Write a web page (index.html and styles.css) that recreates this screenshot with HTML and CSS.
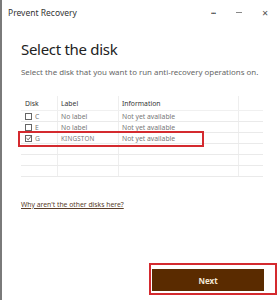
FILE: index.html
```html
<!DOCTYPE html>
<html>
<head>
<meta charset="utf-8">
<link rel="stylesheet" href="styles.css">
</head>
<body>
<div class="window">
  <div class="titlebar">
    <span class="title">Prevent Recovery</span>
    <div class="controls">
      <span class="ctl dots">···</span>
      <span class="ctl min"><span class="minline"></span></span>
      <span class="ctl close">✕</span>
    </div>
  </div>
  <div class="content">
    <h1 class="heading">Select the disk</h1>
    <p class="sub">Select the disk that you want to run anti-recovery operations on.</p>
    <div class="table">
      <div class="row head">
        <div class="c c1">Disk</div>
        <div class="c c2">Label</div>
        <div class="c c3">Information</div>
        <div class="c c4"></div>
      </div>
      <div class="row">
        <div class="c c1"><span class="box"></span>C</div>
        <div class="c c2">No label</div>
        <div class="c c3">Not yet available</div>
        <div class="c c4"></div>
      </div>
      <div class="row">
        <div class="c c1"><span class="box"></span>E</div>
        <div class="c c2">No label</div>
        <div class="c c3">Not yet available</div>
        <div class="c c4"></div>
      </div>
      <div class="row">
        <div class="c c1"><span class="box checked"><svg viewBox="0 0 8 8" width="8" height="8"><path d="M1.5 4.2 L3.2 5.8 L6.5 1.8" fill="none" stroke="#555" stroke-width="0.9"/></svg></span>G</div>
        <div class="c c2 kingston">KINGSTON</div>
        <div class="c c3">Not yet available</div>
        <div class="c c4"></div>
      </div>
      <div class="row"><div class="c c1"></div><div class="c c2"></div><div class="c c3"></div><div class="c c4"></div></div>
      <div class="row"><div class="c c1"></div><div class="c c2"></div><div class="c c3"></div><div class="c c4"></div></div>
      <div class="row"><div class="c c1"></div><div class="c c2"></div><div class="c c3"></div><div class="c c4"></div></div>
      <div class="mark-row"></div>
    </div>
    <a class="link" href="#">Why aren't the other disks here?</a>
  </div>
  <div class="footer">
    <div class="mark-btn">
      <button class="next">Next</button>
    </div>
  </div>
</div>
</body>
</html>
```
FILE: styles.css
```css
html, body {
  margin: 0;
  padding: 0;
  background: #fff;
}
.window {
  width: 278px;
  height: 300px;
  border-left: 2px solid #7a7a7a;
  display: flex;
  flex-direction: column;
  font-family: "Noto Sans", "DejaVu Sans", sans-serif;
  color: #333;
  overflow: hidden;
}
.titlebar {
  height: 24px;
  display: flex;
  align-items: center;
  justify-content: space-between;
  padding-left: 6px;
}
.title {
  font-size: 8.5px;
  color: #333;
}
.controls {
  display: flex;
  align-items: center;
  padding-right: 2px;
}
.ctl {
  width: 26px;
  height: 10px;
  display: flex;
  align-items: center;
  justify-content: center;
  color: #444;
  font-size: 9px;
}
.dots { font-weight: bold; letter-spacing: -1px; }
.minline {
  width: 6px;
  height: 1px;
  background: #888;
}
.close { font-size: 8px; color: #555; }
.content {
  padding-left: 19px;
  padding-right: 18px;
  flex: 1;
}
.heading {
  margin: 15px 0 0 0;
  font-family: "Noto Sans", sans-serif;
  font-size: 15px;
  letter-spacing: -0.3px;
  font-weight: normal;
  color: #222;
  line-height: 20px;
}
.sub {
  margin: 8px 0 0 0;
  font-size: 7.9px;
  color: #666;
  line-height: 10px;
}
.table {
  position: relative;
  margin-top: 19px;
  width: 242px;
  font-size: 6.8px;
  color: #777;
}
.row {
  display: flex;
  height: 10px;
  border-bottom: 1px solid #eaeaea;
}
.row.head {
  height: 14px;
  color: #333;
  border-bottom-color: #f0f0f0;
}
.c {
  display: flex;
  align-items: center;
  border-right: 1px solid #eeeeee;
  box-sizing: border-box;
  padding-left: 3px;
  white-space: nowrap;
}
.c1 { width: 37px; padding-left: 4px; }
.c2 { width: 61px; }
.c3 { width: 120px; }
.c4 { flex: 1; border-right: none; }
.kingston { font-size: 6.3px; letter-spacing: 0.2px; }
.box {
  width: 7px;
  height: 7px;
  border: 1px solid #666;
  box-sizing: border-box;
  margin-right: 3px;
  display: inline-flex;
  align-items: center;
  justify-content: center;
  position: relative;
}
.box svg {
  position: absolute;
  left: -1px;
  top: -2px;
}
.mark-row {
  position: absolute;
  left: -3px;
  top: 35px;
  width: 186px;
  height: 16px;
  border: 2px solid #d42a2f;
  box-sizing: border-box;
}
.link {
  display: inline-block;
  margin-top: 23px;
  font-size: 6.8px;
  color: #5a3d28;
  text-decoration: underline;
}
.footer {
  display: flex;
  justify-content: flex-end;
  padding-right: 3px;
  padding-bottom: 5px;
}
.mark-btn {
  border: 2px solid #d42a2f;
  padding: 4px 11px 2px 1px;
}
.next {
  width: 112px;
  height: 22px;
  background: #5a2b00;
  color: #f3e6d6;
  border: none;
  font-family: "Noto Sans", sans-serif;
  font-size: 8px;
  font-weight: bold;
  display: block;
}
```
